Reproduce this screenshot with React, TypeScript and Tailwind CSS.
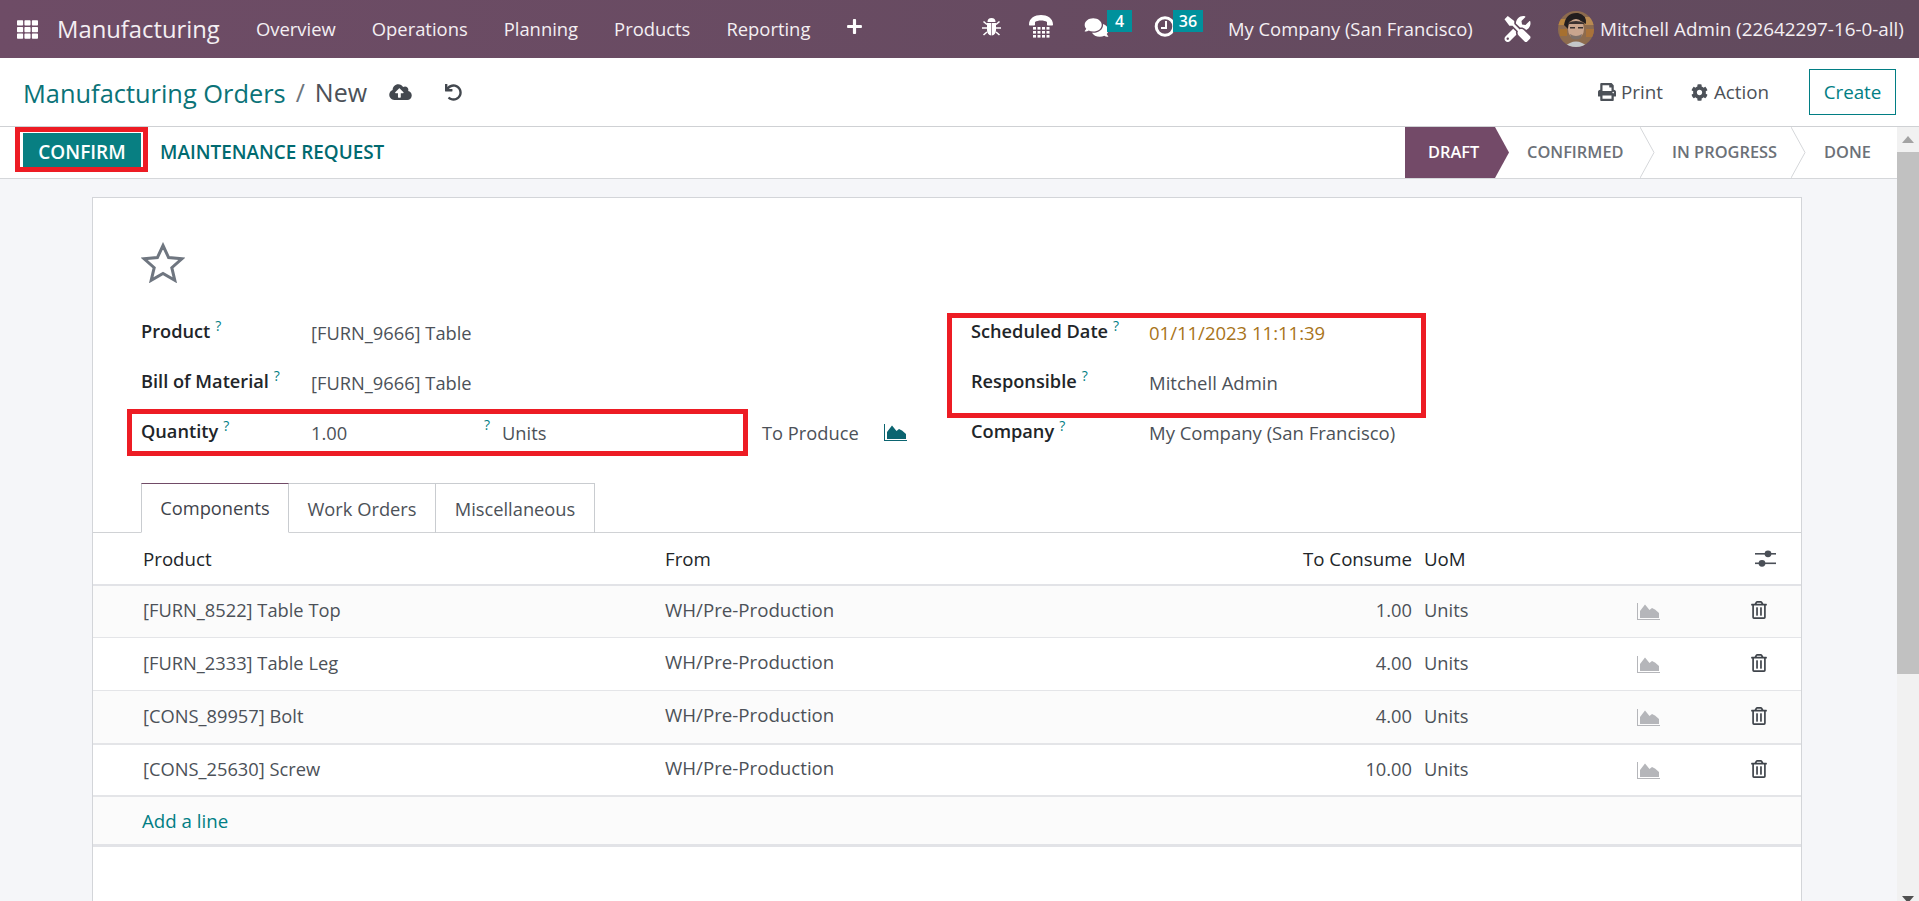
import React from 'react';
import { FaComments, FaTools, FaPrint, FaCog, FaCloudUploadAlt, FaUndo, FaRegTrashAlt, FaTh, FaPlus } from 'react-icons/fa';

const Help = () => (
  <sup className="ml-[5px] text-[14px] font-normal text-[#017e84]">?</sup>
);

const Label = ({ text }: { text: string }) => (
  <div className="text-[#212529] text-[18.200px] font-semibold whitespace-nowrap">
    {text}
    <Help />
  </div>
);

const Sliders = () => (
  <svg viewBox="0 0 21 17" className="w-[21px] h-[17px] text-[#4a4f57]" fill="currentColor">
    <rect x="0" y="3" width="21" height="1.6" />
    <rect x="0" y="12.5" width="21" height="1.6" />
    <circle cx="13" cy="3.8" r="3.4" />
    <circle cx="7" cy="13.3" r="3.4" />
  </svg>
);

const AreaIcon = ({ className }: { className: string }) => (
  <svg viewBox="0 0 23 17" className={className} fill="currentColor">
    <path d="M0 0h1v16h22v1H0Z" />
    <path d="M3 15V8L8 1.5l4.5 5.5 2.5-2 3 1.5 4 3.5V15Z" />
  </svg>
);

const BugIcon = () => (
  <svg viewBox="0 0 19 20" className="w-[19px] h-[20px]" fill="currentColor">
    <path d="M5.5 5a4 4 0 0 1 8 0Z" />
    <path d="M5 6h4.2v12.5C6.5 18.2 5 16 5 13Z" />
    <path d="M14 6H9.8v12.5c2.7-.3 4.2-2.5 4.2-5.5Z" />
    <path d="M1.5 4.5 5 7.5M17.5 4.5 14 7.5M0 11h5M19 11h-5M1.5 18l3.5-3M17.5 18 14 15" stroke="currentColor" strokeWidth="1.6" />
  </svg>
);

const PhoneIcon = () => (
  <svg viewBox="0 0 24 23" className="w-[24px] h-[23px]" fill="currentColor">
    <path d="M0 9.5C0 3 6 0 12 0s12 3 12 9.5c0 .6-.4 1-1 1h-4c-.6 0-1-.4-1-1V7c-1.500-1-3.500-1.500-6-1.500S7.500 6 6 7v2.500c0 .6-.4 1-1 1H1c-.6 0-1-.4-1-1Z" />
    <g>
      {[12, 16, 20].map((y) =>
        [4, 8.5, 13, 17.5].map((x) => <rect key={`${x}-${y}`} x={x} y={y} width="3" height="2.6" />)
      )}
    </g>
  </svg>
);

const ClockIcon = () => (
  <svg viewBox="0 0 22 21" className="w-[22px] h-[21px]" fill="none" stroke="currentColor">
    <circle cx="11" cy="10.500" r="8.800" strokeWidth="3" />
    <path d="M12 5v7H7" strokeWidth="2" />
  </svg>
);

const StarIcon = () => (
  <svg viewBox="0 0 44 41" className="w-[44px] h-[41px] text-[#6f7680]" fill="none" stroke="currentColor" strokeWidth="3">
    <path d="M22 3.500 27.600 15.600 40.800 16.800 30.800 25.700 33.800 38.300 22 31.500 10.200 38.300 13.200 25.700 3.200 16.800 16.400 15.600Z" />
  </svg>
);

const Avatar = () => (
  <svg viewBox="0 0 36 36" className="w-[36px] h-[36px] rounded-full shrink-0">
    <rect width="36" height="36" fill="#8d6b4e" />
    <rect x="0" y="8" width="9" height="6" fill="#b9853f" />
    <rect x="2" y="18" width="7" height="7" fill="#a7702f" />
    <rect x="27" y="6" width="9" height="8" fill="#b98a52" />
    <rect x="28" y="18" width="8" height="8" fill="#a9723a" />
    <path d="M6 14 Q8 1 20 2 Q29 4 28 13 L25 11 Q17 6 11 11 L10 18 Z" fill="#221e1e" />
    <ellipse cx="18" cy="18" rx="8" ry="10" fill="#c9a58e" />
    <path d="M10 12 Q18 8 26 12 L26 13 L10 13 Z" fill="#3a3230" />
    <rect x="12" y="16" width="5" height="1.500" fill="#3a3230" />
    <rect x="20" y="16" width="5" height="1.500" fill="#3a3230" />
    <path d="M12 23 Q18 27 24 23 L23 27 Q18 30 13 27 Z" fill="#7d6f68" />
    <path d="M6 36 Q18 25 30 36 Z" fill="#c4c7ca" />
  </svg>
);

const components = [
  { name: '[FURN_8522] Table Top', qty: '1.00', bg: 'bg-[#fbfbfb]', line: 'border-b h-[52px]' },
  { name: '[FURN_2333] Table Leg', qty: '4.00', bg: 'bg-white', line: 'border-b h-[53px]' },
  { name: '[CONS_89957] Bolt', qty: '4.00', bg: 'bg-[#fbfbfb]', line: 'border-b-2 h-[54px]' },
  { name: '[CONS_25630] Screw', qty: '10.00', bg: 'bg-white', line: 'border-b-2 h-[52px]' },
];

const steps = [
  { text: 'CONFIRMED', w: 'w-[145px]' },
  { text: 'IN PROGRESS', w: 'w-[151px]' },
];

const Chevron = () => (
  <svg viewBox="0 0 15 51" className="w-[15px] h-[51px] shrink-0 -mr-[15px]" fill="none">
    <path d="M0 0 L14 25.5 L0 51" stroke="#d5d7da" strokeWidth="1" />
  </svg>
);

export default function App() {
  return (
    <div className="h-screen overflow-hidden flex flex-col bg-white font-['Open_Sans','Noto_Sans',sans-serif] text-[18.3px] text-[#4c5158]">
      <nav className="h-[58px] shrink-0 flex items-center bg-gradient-to-r from-[#6e4c66] to-[#614a5d] text-white">
        <FaTh className="ml-[17px] w-[21px] h-[21px] text-white" />
        <span className="ml-[19px] w-[199px] pt-[1px] text-[23.800px] text-[#f4eff3]">Manufacturing</span>
        <div className="flex items-center gap-[36px] text-[18.400px] text-[#f4eff3]">
          <span>Overview</span>
          <span>Operations</span>
          <span>Planning</span>
          <span>Products</span>
          <span>Reporting</span>
        </div>
        <FaPlus className="ml-[36px] mb-[5px] w-[17px] h-[17px]" />
        <div className="ml-auto w-[937px] shrink-0 flex items-center">
          <div className="mb-[4px]"><BugIcon /></div>
          <div className="ml-[28px] mb-[5px]"><PhoneIcon /></div>
          <div className="relative ml-[30px] mb-[3px]">
            <FaComments className="w-[27px] h-[21px]" />
            <span className="absolute left-[24px] -top-[7px] w-[25px] h-[22px] flex items-center justify-center bg-[#00919c] text-[16px] font-semibold">4</span>
          </div>
          <div className="relative ml-[44px] mb-[5px]">
            <ClockIcon />
            <span className="absolute left-[19px] -top-[6px] w-[30px] h-[22px] flex items-center justify-center bg-[#00919c] text-[16px] font-semibold">36</span>
          </div>
          <span className="ml-[52px] w-[276px] text-[18.400px] text-[#f4eff3] whitespace-nowrap">My Company (San Francisco)</span>
          <FaTools className="w-[27px] h-[26px]" />
          <div className="ml-[27px] flex items-center gap-[6px]">
            <Avatar />
            <span className="text-[18.850px] text-[#f4eff3] whitespace-nowrap">Mitchell Admin (22642297-16-0-all)</span>
          </div>
        </div>
      </nav>

      <header className="h-[69px] shrink-0 flex items-center border-b border-[#cfd1d4] pl-[23px]">
        <span className="pt-[2px] text-[25.400px] text-[#0b7378]">Manufacturing Orders</span>
        <span className="ml-[10px] pt-[2px] text-[25px] text-[#6c757d]">/</span>
        <span className="ml-[10px] pt-[2px] text-[25px] text-[#4c5158]">New</span>
        <FaCloudUploadAlt className="ml-[22px] w-[23px] h-[18px] text-[#43484f]" />
        <FaUndo className="ml-[33px] w-[17px] h-[17px] text-[#43484f]" />
        <div className="ml-auto flex items-center text-[18.800px] font-medium text-[#4c5158]">
          <FaPrint className="w-[18px] h-[18px] mr-[5px]" />
          <span>Print</span>
          <FaCog className="ml-[28px] mr-[6px] w-[17px] h-[17px]" />
          <span>Action</span>
        </div>
        <button className="ml-[40px] mr-[23px] w-[87px] h-[46px] border border-[#017e84] text-[#017e84] text-[18.800px] font-medium">Create</button>
      </header>

      <div className="flex-1 min-h-0 flex">
        <div className="flex-1 min-w-0 flex flex-col bg-[#f5f6f9]">
          <div className="h-[52px] shrink-0 flex items-center bg-white border-b border-[#d5d7da] relative">
            <div className="absolute left-[15px] top-0 w-[133px] h-[45px] border-[5px] border-[#ed1c24] pointer-events-none" />
            <button className="ml-[23px] mb-[5px] pt-[5px] w-[118px] h-[34px] bg-[#087f82] text-white text-[19px] font-semibold">CONFIRM</button>
            <span className="ml-[19px] text-[18.900px] font-semibold text-[#016a70]">MAINTENANCE REQUEST</span>
            <div className="ml-auto flex h-[51px] items-stretch text-[16.400px] font-semibold text-[#6c7178]">
              <div className="relative w-[90px] bg-[#734a68] text-white flex items-center pl-[23px]">
                DRAFT
                <svg viewBox="0 0 15 51" className="absolute -right-[15px] top-0 w-[15px] h-[51px]">
                  <path d="M0 0 L14 25.5 L0 51 Z" fill="#734a68" />
                </svg>
              </div>
              {steps.map((s) => (
                <div key={s.text} className={`${s.w} pl-[32px] flex items-center justify-between`}>
                  <span>{s.text}</span>
                  <Chevron />
                </div>
              ))}
              <div className="w-[106px] flex items-center pl-[33px]">DONE</div>
            </div>
          </div>

          <div className="flex-1 min-h-0 px-[92px] pt-[18px] overflow-hidden">
            <div className="w-[1710px] -mr-[1px] h-full bg-white border border-[#d3d5d9] border-b-0">
              <div className="pl-[48px] pt-[44px]">
                <StarIcon />
                <div className="flex mt-[24px]">
                  <div className="w-[830px]">
                    <div className="relative h-[50px] flex items-center">
                      <div className="w-[170px]"><Label text="Product" /></div>
                      <span className="pt-[2px]">[FURN_9666] Table</span>
                    </div>
                    <div className="h-[50px] flex items-center">
                      <div className="w-[170px]"><Label text="Bill of Material" /></div>
                      <span className="pt-[2px]">[FURN_9666] Table</span>
                    </div>
                    <div className="relative h-[50px] flex items-center">
                      <div className="absolute -left-[14px] top-[2px] w-[621px] h-[47px] border-[5px] border-[#ed1c24] pointer-events-none" />
                      <div className="w-[170px]"><Label text="Quantity" /></div>
                      <span className="w-[173px] pt-[2px]">1.00</span>
                      <sup className="w-[18px] text-[14px] text-[#017e84]">?</sup>
                      <span className="w-[260px] pt-[2px]">Units</span>
                      <span className="w-[122px] pt-[2px] font-medium">To Produce</span>
                      <AreaIcon className="w-[23px] h-[17px] text-[#0b6470]" />
                    </div>
                  </div>
                  <div className="relative text-[18.500px]">
                    <div className="absolute -left-[24px] top-[6px] w-[479px] h-[105px] border-[5px] border-[#ed1c24] pointer-events-none" />
                    <div className="h-[50px] flex items-center">
                      <div className="w-[178px]"><Label text="Scheduled Date" /></div>
                      <span className="pt-[2px] text-[#a8741a]">01/11/2023 11:11:39</span>
                    </div>
                    <div className="h-[50px] flex items-center">
                      <div className="w-[178px]"><Label text="Responsible" /></div>
                      <span className="pt-[2px]">Mitchell Admin</span>
                    </div>
                    <div className="h-[50px] flex items-center">
                      <div className="w-[178px]"><Label text="Company" /></div>
                      <span className="pt-[2px]">My Company (San Francisco)</span>
                    </div>
                  </div>
                </div>
                <div className="mt-[26px] flex h-[50px]">
                  <div className="w-[148px] flex items-center justify-center bg-white border border-[#c9ccd0] border-t-[#714b67] border-b-white relative z-10 text-[#3f444b]">Components</div>
                  <div className="w-[147px] flex items-center justify-center border border-l-0 border-[#c9ccd0] border-b-0">Work Orders</div>
                  <div className="w-[159px] flex items-center justify-center border border-l-0 border-[#c9ccd0] border-b-0">Miscellaneous</div>
                </div>
              </div>
              <div className="-mt-px border-t border-[#d0d2d5]">
                <div className="h-[53px] pt-[2px] flex items-center border-b-2 border-[#e2e3e7] text-[18.700px] font-medium text-[#212529]">
                  <span className="ml-[50px] w-[522px]">Product</span>
                  <span className="w-[538px]">From</span>
                  <span className="w-[209px] text-right">To Consume</span>
                  <span className="ml-[12px] w-[60px]">UoM</span>
                  <span className="ml-[271px] -mt-[2px]"><Sliders /></span>
                </div>
                {components.map((c) => (
                  <div key={c.name} className={`${c.bg} ${c.line} pb-[3px] border-[#e4e5e8] flex items-center`}>
                    <span className="ml-[50px] w-[522px]">{c.name}</span>
                    <span className="w-[538px] text-[18.700px]">WH/Pre-Production</span>
                    <span className="w-[209px] text-right">{c.qty}</span>
                    <span className="ml-[12px] w-[60px]">Units</span>
                    <AreaIcon className="ml-[153px] mt-[3px] w-[23px] h-[17px] text-[#b5b6ba]" />
                    <FaRegTrashAlt className="ml-[91px] w-[16px] h-[18px] text-[#3f444b]" />
                  </div>
                ))}
                <div className="h-[50px] pt-[2px] flex items-center bg-[#fbfbfb] border-b-[3px] border-[#e2e3e7]">
                  <span className="ml-[49px] text-[18.700px] text-[#017e84]">Add a line</span>
                </div>
              </div>
            </div>
          </div>
        </div>

        <div className="w-[22px] shrink-0 flex flex-col items-center bg-[#f1f1f1]">
          <div className="h-[25px] w-full flex items-center justify-center">
            <div className="w-0 h-0 border-l-[6px] border-r-[6px] border-b-[7px] border-l-transparent border-r-transparent border-b-[#a3a3a3]" />
          </div>
          <div className="h-[522px] w-full bg-[#c1c1c1]" />
          <div className="flex-1" />
          <div className="w-0 h-0 border-l-[6px] border-r-[6px] border-t-[7px] border-l-transparent border-r-transparent border-t-[#505050] -mb-[2px]" />
        </div>
      </div>
    </div>
  );
}
